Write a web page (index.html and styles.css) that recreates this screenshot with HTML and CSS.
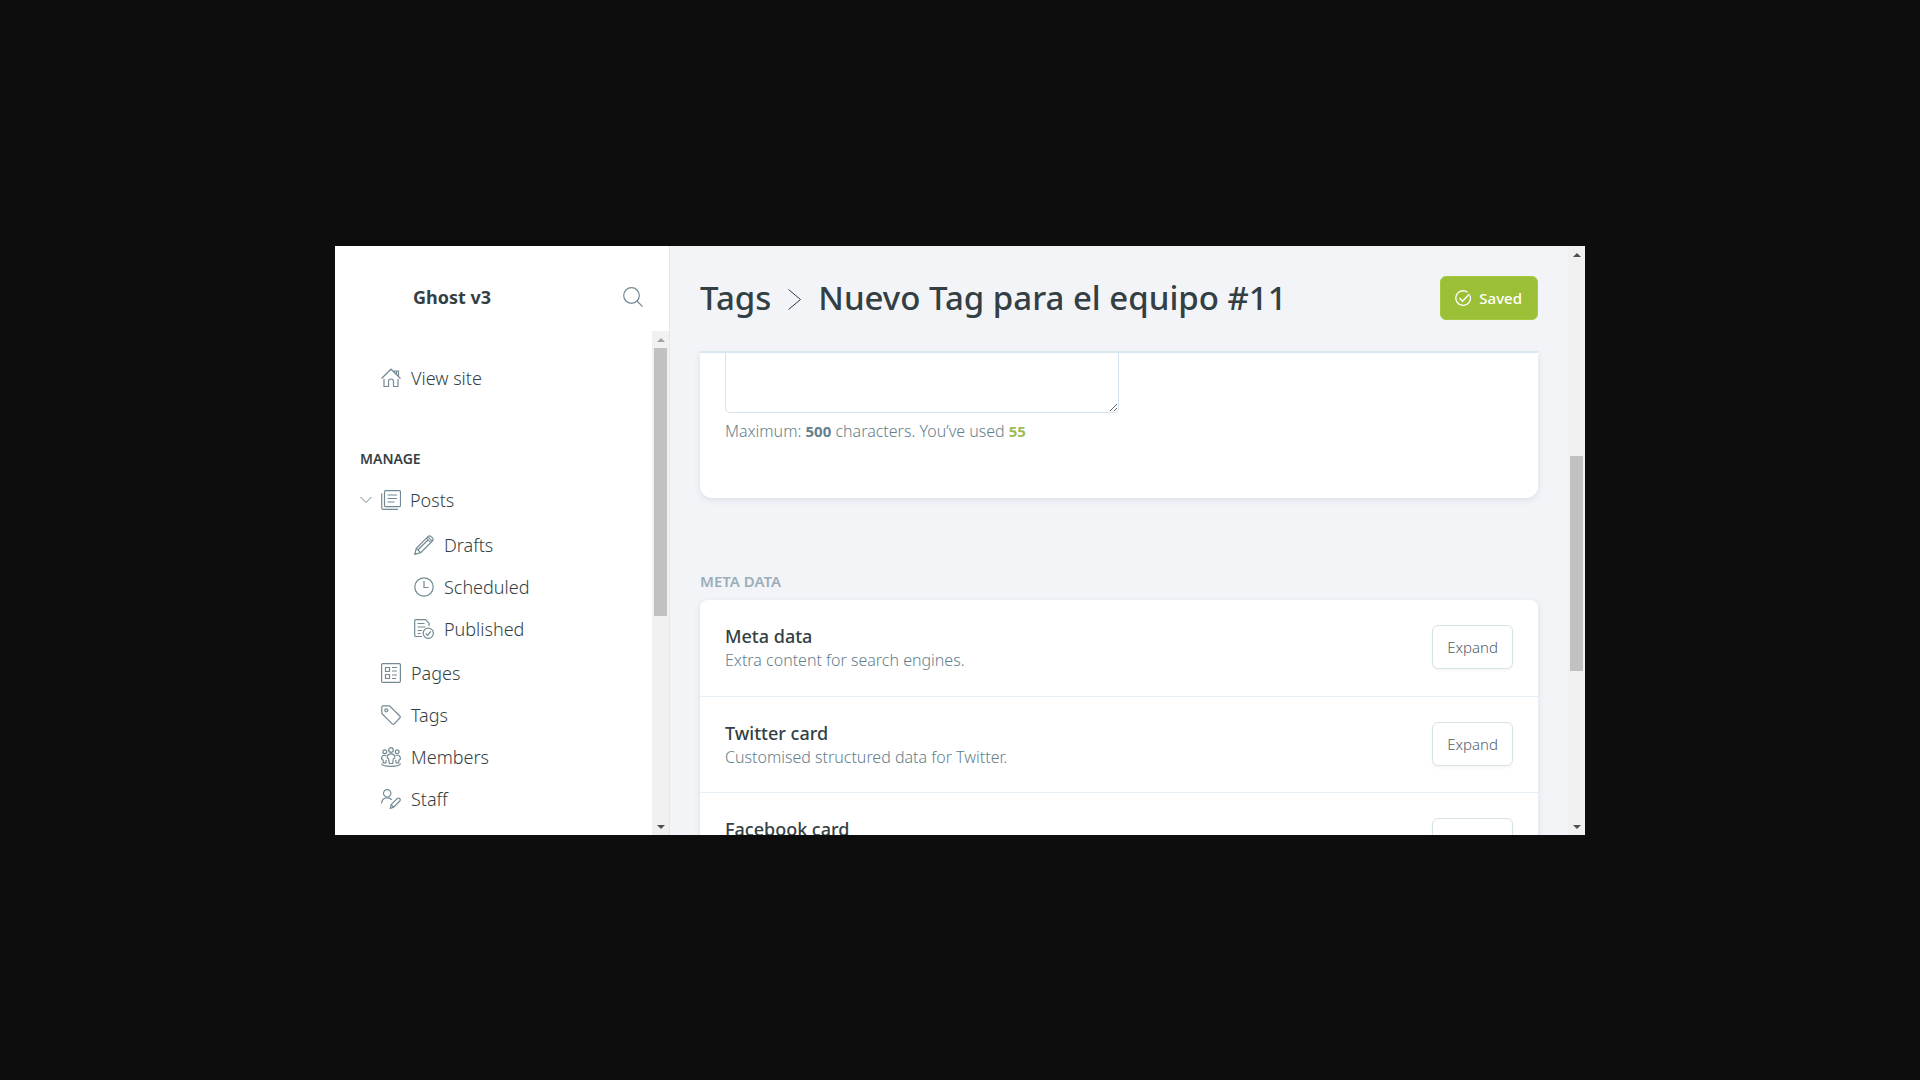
FILE: index.html
```html
<!DOCTYPE html>
<html lang="en">
<head>
<meta charset="utf-8">
<meta name="viewport" content="width=device-width, initial-scale=1">
<title>Tags - Ghost v3</title>
<link rel="stylesheet" href="styles.css">
</head>
<body>
<div class="app">
  <aside class="sidebar">
    <header class="sidebar-head">
      <span class="site-name">Ghost v3</span>
      <button class="icon-button" type="button" aria-label="Search">
        <svg class="icon" viewBox="0 0 20 20"><circle cx="8.5" cy="8.5" r="7.8"/><path d="M14 14l5.600 5.600"/></svg>
      </button>
    </header>
    <div class="sidebar-body">
      <nav class="nav">
        <ul class="nav-list">
          <li><a class="nav-link" href="#"><svg class="icon" viewBox="0 0 20 20"><path d="M.5 10.500L10 1.200l9.500 9.300M3 10.800v7.700h4.500v-5a2.500 2.500 0 0 1 5 0v5H17v-7.700M13.500 4.300V3h4v5.200M15.500 3v3"/></svg>View site</a></li>
        </ul>
        <h2 class="nav-title">Manage</h2>
        <ul class="nav-list">
          <li>
            <a class="nav-link has-toggle" href="#"><svg class="chevron" viewBox="0 0 12 8"><path d="M.5 1l5.500 5.500L11.500 1"/></svg><svg class="icon" viewBox="0 0 20 20"><rect x="3.500" y=".7" width="16" height="16" rx="1.200"/><path d="M.7 3.500v14.300q0 1.500 1.500 1.500H17M6.500 5h9.500M6.500 8.500h9.500M6.500 12h7"/></svg>Posts</a>
            <ul class="nav-list nav-sub">
              <li><a class="nav-link" href="#"><svg class="icon" viewBox="0 0 20 20"><path d="M.7 19.300l1.600-6L13.700 1.900q1.500-1.500 3-.7l2 2q1 1.600-.6 3.100L6.700 17.700zM2.300 13.300l4.400 4.400M12.400 3.200l4.400 4.400M14 1.800l4.300 4.300M4 14.800L14 5M.9 17.500l1.600 1.600"/></svg>Drafts</a></li>
              <li><a class="nav-link" href="#"><svg class="icon" viewBox="0 0 20 20"><circle cx="10" cy="10" r="9.200"/><path d="M10 4v6.500h4.500"/></svg>Scheduled</a></li>
              <li><a class="nav-link" href="#"><svg class="icon" viewBox="0 0 20 20"><path d="M8 17.500H2q-1.300 0-1.300-1.300V2Q.7.700 2 .7h9.500L15 4.200V7M3.500 4.500h7M3.500 8h8M3.500 11.500h4.500M3.500 14.500h3"/><circle cx="14.300" cy="14.300" r="5.100"/><path d="M11.800 14.500l1.800 1.800 3.200-4"/></svg>Published</a></li>
            </ul>
          </li>
          <li><a class="nav-link" href="#"><svg class="icon" viewBox="0 0 20 20"><rect x=".6" y=".6" width="18.800" height="18.800" rx="1.200"/><path d="M4.500 4.500h4v4h-4zM4.500 11.500h4v4h-4zM11 4.500h5M11 8h5M11 12h5M11 15.500h4"/></svg>Pages</a></li>
          <li><a class="nav-link" href="#"><svg class="icon" viewBox="0 0 20 20"><path d="M.8 2.200Q.8.800 2.200.8h6.300L18.800 11q1 1 0 2l-5.600 5.800q-1 1-2 0L.8 8.500z"/><circle cx="5.300" cy="5.300" r="1.500"/></svg>Tags</a></li>
          <li><a class="nav-link" href="#"><svg class="icon" viewBox="0 0 20 20"><circle cx="10" cy="3" r="2.300"/><circle cx="3.800" cy="4.800" r="1.900"/><circle cx="16.200" cy="4.800" r="1.900"/><path d="M8.300 16.500L7.700 12 6.300 11V9.500Q6.800 6.800 10 6.800t3.700 2.700V11L12.300 12l-.6 4.500zM5.500 8.500Q1.300 7.500.7 10.700v1.500l1.300 1 .4 2.600h2.400l.5-3M14.500 8.500q4.200-1 4.800 2.200v1.500l-1.300 1-.4 2.600h-2.400l-.5-3M.6 16.500q0 2.800 9.400 2.800t9.400-2.800"/></svg>Members</a></li>
          <li><a class="nav-link" href="#"><svg class="icon" viewBox="0 0 20 20"><circle cx="6.200" cy="4.300" r="3.700"/><path d="M.6 14.500Q.8 8.800 6.200 8.800q3 0 4.600 2M9.300 19.400l.8-3.700 6.200-6.200q1.200-.9 2.300 0 1.200 1.200.2 2.500l-6.200 6.200zM10.100 15.700l2.500 2.500"/></svg>Staff</a></li>
        </ul>
      </nav>
      <div class="scrollbar" aria-hidden="true"><i class="arrow up dim"></i><div class="track"><div class="thumb"></div></div><i class="arrow down"></i></div>
    </div>
  </aside>
  <main class="main">
    <div class="content">
      <header class="page-head">
        <h1 class="page-title"><a href="#">Tags</a><svg class="crumb" viewBox="0 0 13 21"><path d="M.5.500l12 10-12 10"/></svg><span>Nuevo Tag para el equipo #11</span></h1>
        <button class="button save" type="button"><svg class="check" viewBox="0 0 16 16"><path d="M15 5.500A7.300 7.300 0 1 1 12.500 2.200"/><path d="M4.500 8l3 3.200L14.500 4"/></svg>Saved</button>
      </header>
      <section class="card details">
        <textarea class="description" aria-label="Description"></textarea>
        <p class="hint">Maximum: <b>500</b> characters. You’ve used <b class="used">55</b></p>
      </section>
      <h2 class="section-title">Meta data</h2>
      <section class="card">
        <div class="row"><div><h3 class="row-title">Meta data</h3><p class="row-text">Extra content for search engines.</p></div><button class="button" type="button">Expand</button></div>
        <div class="row"><div><h3 class="row-title">Twitter card</h3><p class="row-text">Customised structured data for Twitter.</p></div><button class="button" type="button">Expand</button></div>
        <div class="row"><div><h3 class="row-title">Facebook card</h3></div><button class="button" type="button">Expand</button></div>
      </section>
    </div>
    <div class="scrollbar main-scroll" aria-hidden="true"><i class="arrow up"></i><div class="track"><div class="thumb"></div></div><i class="arrow down"></i></div>
  </main>
</div>
</body>
</html>
```
FILE: styles.css
```css
* { box-sizing: border-box; }
body {
  margin: 0;
  height: 100vh;
  display: flex;
  padding: 246px 335px 245px;
  background: #0d0d0d;
  color: #343f44;
  font: 300 16px/24px "Noto Sans", "Open Sans", sans-serif;
}
h1, h2, h3, p, ul { margin: 0; padding: 0; }
ul { list-style: none; }
a { color: inherit; text-decoration: none; }
button { font: inherit; cursor: pointer; }
svg { fill: none; stroke: #738a94; flex: none; }

.app { flex: 1; min-width: 0; display: flex; overflow: hidden; background: #f2f4f8; }

/* Sidebar */
.sidebar { flex: none; width: 335px; display: flex; flex-direction: column; background: #fff; border-right: 1px solid #e5e7ed; }
.sidebar-head { flex: none; height: 85px; display: flex; align-items: center; justify-content: space-between; padding: 16px 26px 0 78px; }
.site-name { font-size: 18px; font-weight: 700; }
.icon-button { display: flex; padding: 0; border: 0; background: none; }
.icon { width: 20px; height: 20px; stroke-width: 1.2; }
.sidebar-body { flex: 1; min-height: 0; display: flex; }
.nav { flex: 1; min-width: 0; overflow: hidden; padding-top: 26px; }
.nav-link { display: flex; align-items: center; gap: 10px; height: 42px; padding-left: 46px; font-size: 18px; }
.nav-link.has-toggle { padding-left: 25px; gap: 9px; }
.chevron { width: 12px; height: 8px; }
.nav-sub { padding: 3px 0 2px; }
.nav-sub .nav-link { padding-left: 79px; }
.nav-title { padding: 48px 0 8px 25px; font-size: 14px; font-weight: 600; line-height: 24px; text-transform: uppercase; }

/* Scrollbars */
.scrollbar { flex: none; width: 17px; display: flex; flex-direction: column; background: #f1f1f1; }
.track { flex: 1; padding: 0 2px; }
.thumb { height: 57%; background: #c1c1c1; }
.main-scroll .track { padding-top: 193px; }
.main-scroll .thumb { height: 215px; }
.arrow { flex: none; height: 17px; display: flex; align-items: center; justify-content: center; }
.arrow::before { content: ""; border: 4px solid transparent; border-top-width: 0; border-bottom-color: #505050; }
.arrow.down::before { border-width: 4px 4px 0; border-top-color: #505050; }
.arrow.dim::before { border-bottom-color: #a3a3a3; }

/* Main pane */
.main { flex: 1; min-width: 0; display: flex; }
.content { flex: 1; min-width: 0; padding: 0 30px; }
.page-head { height: 107px; display: flex; align-items: center; justify-content: space-between; padding-bottom: 2px; border-bottom: 2px solid #dfebf3; }
.page-title { display: flex; align-items: center; gap: 17px; font-size: 33px; font-weight: 500; line-height: 42px; white-space: nowrap; }
.crumb { width: 13px; height: 21px; stroke: #343f44; margin-top: 4px; }
.button {
  flex: none;
  display: flex;
  align-items: center;
  height: 44px;
  padding: 0 14px;
  border: 1px solid #d6e3e9;
  border-radius: 6px;
  background: #fff;
  color: #50636b;
  font-size: 15px;
  box-shadow: 0 2px 3px rgba(0, 0, 0, .04);
}
.save { gap: 8px; padding: 0 15px 0 14px; border-color: #a4cb40; background: #9bc038; color: #fff; font-weight: 500; box-shadow: none; }
.check { width: 16px; height: 16px; stroke: #fff; stroke-width: 1.3; }

.card { background: #fff; border-radius: 8px; box-shadow: 0 2px 6px rgba(60, 70, 80, .12); }
.details { border-radius: 0 0 12px 12px; padding: 0 25px 55px; }
.description { display: block; width: 394px; max-width: 100%; height: 60px; border: 1px solid #d6e3ec; border-top: 0; border-radius: 0 0 5px 5px; resize: both; background: #fff; }
.hint { padding-top: 6px; color: #65808c; font-size: 16px; }
.hint b { font-size: 15px; font-weight: 700; }
.hint .used { color: #9fbb58; }
.section-title { padding: 71px 0 7px; color: #9baeb8; font-size: 15px; font-weight: 600; text-transform: uppercase; }
.row { height: 97px; display: flex; align-items: flex-start; justify-content: space-between; padding: 25px 25px 0; border-bottom: 1px solid #e5eff5; }
.row + .row { height: 96px; }
.row-title { font-size: 18px; font-weight: 500; line-height: 23px; }
.row-text { color: #65808c; font-size: 16px; }
```
